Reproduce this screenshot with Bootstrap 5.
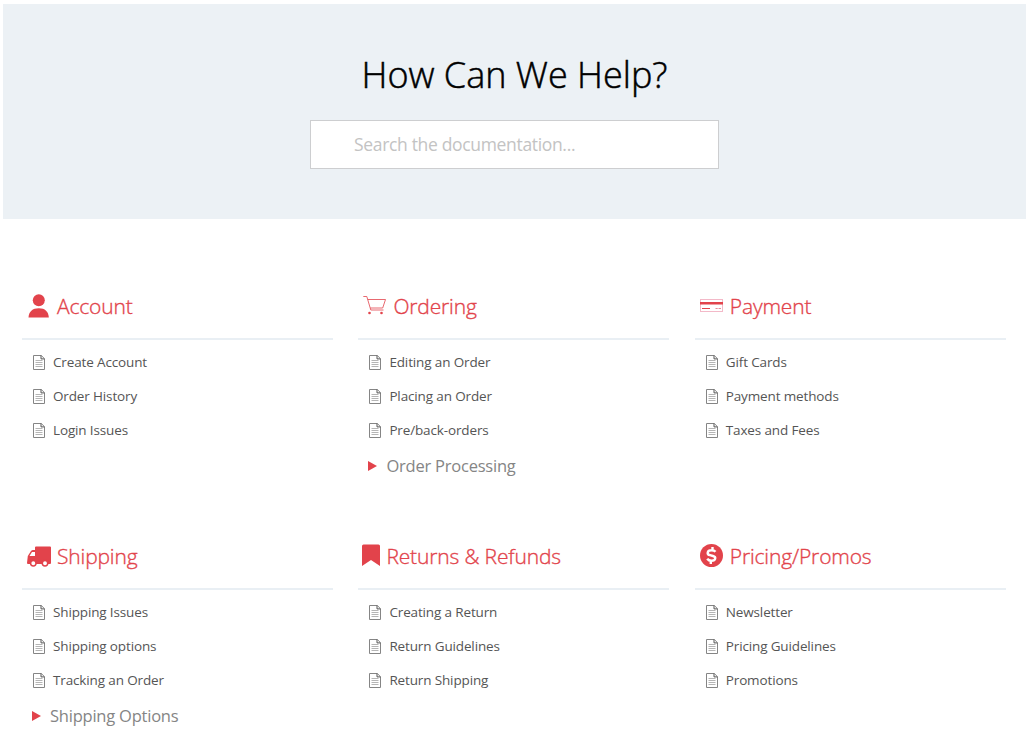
<!DOCTYPE html>
<html lang="en">
<head>
<meta charset="utf-8">
<meta name="viewport" content="width=device-width, initial-scale=1">
<title>Help Center</title>
<link rel="stylesheet" href="https://cdn.jsdelivr.net/npm/bootstrap@5.3.0/dist/css/bootstrap.min.css">
<style>
body{font-family:"Open Sans","Noto Sans",sans-serif;background:#fff}
.hero{margin:0 2px 0 3px;height:215px;background:#ecf1f5;padding-top:48px}
.page{padding-top:4px}
.hero h1{font-size:36px;line-height:46px;font-weight:300;color:#000;margin:0 0 22px;-webkit-text-stroke:.5px #000}
.search-box{width:409px;height:49px;border:1px solid #cdced0;padding:0 43px 2px;font-size:17.5px;color:#555;letter-spacing:-.33px}
.search-box::placeholder{color:#c3c3c3;opacity:1}
.topics{display:grid;grid-template-columns:311px 311px 311px;column-gap:25.4px;grid-template-rows:250px auto;margin:70px 0 0 22px}
.topic-title{height:51px;border-bottom:2px solid #e9eff4;color:#e2434b;padding:0 0 16px 5px;margin-bottom:5px}
.topic-title h2{font-size:21px;line-height:30px;font-weight:300;margin:0 0 0 6px;letter-spacing:-.15px;-webkit-text-stroke:.35px #e2434b}
.topic-title.narrow{padding-left:4px}
.docs li{height:34px;padding-left:11px;font-size:13.5px;color:#555;letter-spacing:-.14px}
.docs li.more{height:38px;padding-left:10px;font-size:16.5px;color:#858585;letter-spacing:-.22px}
.docs svg{margin-right:8px}
.docs li.more svg{margin-right:9px}
</style>
</head>
<body>
<svg class="d-none">
<symbol id="doc" viewBox="0 0 12 15"><path d="M.5.5h7.8l3.2 3.2v10.800H.5z" fill="#fff" stroke="#858585"/><path d="M8 .5v3.400h3.500" fill="none" stroke="#555"/><path d="M2.500 5.500h7M2.500 7.500h7M2.500 9.500h7M2.500 11.500h7" stroke="#b5b5b5"/></symbol>
<symbol id="tri" viewBox="0 0 9 10"><path d="M0 0l9 5-9 5z" fill="#e2434b"/></symbol>
</svg>
<div class="page">
<header class="hero d-flex flex-column align-items-center">
<h1><span>How Can We Help?</span></h1>
<input class="search-box rounded-0 bg-white" type="text" placeholder="Search the documentation..." aria-label="Search">
</header>
<main class="topics">
<section>
<div class="topic-title d-flex align-items-center"><svg width="24" height="26" viewBox="0 0 24 26" fill="currentColor"><circle cx="11.800" cy="7.200" r="6"/><path d="M1.500 24.500c.3-6 4-9.300 10.300-9.300s9.700 3.300 10 9.300z"/></svg><h2><span>Account</span></h2></div>
<ul class="docs list-unstyled m-0">
<li class="d-flex align-items-center"><svg width="12" height="15"><use href="#doc"/></svg><span>Create Account</span></li>
<li class="d-flex align-items-center"><svg width="12" height="15"><use href="#doc"/></svg><span>Order History</span></li>
<li class="d-flex align-items-center"><svg width="12" height="15"><use href="#doc"/></svg><span>Login Issues</span></li>
</ul>
</section>
<section>
<div class="topic-title d-flex align-items-center"><svg width="24" height="26" viewBox="0 0 24 26"><path d="M.3 3.500h3.500l4 13.500h12.700M4.800 6.500h17.700l-2.800 8.500H7.300" fill="none" stroke="currentColor" stroke-width=".8"/><circle cx="6.500" cy="20" r="1.300" fill="currentColor"/><circle cx="18.500" cy="20" r="1.300" fill="currentColor"/></svg><h2><span>Ordering</span></h2></div>
<ul class="docs list-unstyled m-0">
<li class="d-flex align-items-center"><svg width="12" height="15"><use href="#doc"/></svg><span>Editing an Order</span></li>
<li class="d-flex align-items-center"><svg width="12" height="15"><use href="#doc"/></svg><span>Placing an Order</span></li>
<li class="d-flex align-items-center"><svg width="12" height="15"><use href="#doc"/></svg><span>Pre/back-orders</span></li>
<li class="more d-flex align-items-center"><svg width="9" height="10"><use href="#tri"/></svg><span>Order Processing</span></li>
</ul>
</section>
<section>
<div class="topic-title d-flex align-items-center"><svg width="24" height="26" viewBox="0 0 24 26"><rect x=".5" y="6.500" width="22" height="12" fill="none" stroke="#f3b9c8"/><path d="M0 9h23v2.500H0z" fill="currentColor"/><path d="M2 15.500h8" stroke="currentColor"/><path d="M15.500 15.500h2.200M18.500 15.500h2.500" stroke="#e88a98"/></svg><h2><span>Payment</span></h2></div>
<ul class="docs list-unstyled m-0">
<li class="d-flex align-items-center"><svg width="12" height="15"><use href="#doc"/></svg><span>Gift Cards</span></li>
<li class="d-flex align-items-center"><svg width="12" height="15"><use href="#doc"/></svg><span>Payment methods</span></li>
<li class="d-flex align-items-center"><svg width="12" height="15"><use href="#doc"/></svg><span>Taxes and Fees</span></li>
</ul>
</section>
<section>
<div class="topic-title d-flex align-items-center"><svg width="24" height="26" viewBox="0 0 24 26"><path d="M9 3.500h14q1 0 1 1V20q0 1-1 1H1q-1 0-1-1l.8-7L4 8q.8-1 2-1h2V4.500q0-1 1-1z" fill="currentColor"/><path d="M2.500 13l2.500-4h3v4z" fill="#fff"/><g fill="#fff" stroke="currentColor" stroke-width="1.500"><circle cx="6.300" cy="20.300" r="2.700"/><circle cx="18" cy="20.300" r="2.700"/></g></svg><h2><span>Shipping</span></h2></div>
<ul class="docs list-unstyled m-0">
<li class="d-flex align-items-center"><svg width="12" height="15"><use href="#doc"/></svg><span>Shipping Issues</span></li>
<li class="d-flex align-items-center"><svg width="12" height="15"><use href="#doc"/></svg><span>Shipping options</span></li>
<li class="d-flex align-items-center"><svg width="12" height="15"><use href="#doc"/></svg><span>Tracking an Order</span></li>
<li class="more d-flex align-items-center"><svg width="9" height="10"><use href="#tri"/></svg><span>Shipping Options</span></li>
</ul>
</section>
<section>
<div class="topic-title narrow d-flex align-items-center"><svg width="18" height="26" viewBox="0 0 18 26" fill="currentColor"><path d="M1.500 1.500h15q1.500 0 1.500 1.500v20l-9-6-9 6V3q0-1.500 1.500-1.500z"/></svg><h2><span>Returns &amp; Refunds</span></h2></div>
<ul class="docs list-unstyled m-0">
<li class="d-flex align-items-center"><svg width="12" height="15"><use href="#doc"/></svg><span>Creating a Return</span></li>
<li class="d-flex align-items-center"><svg width="12" height="15"><use href="#doc"/></svg><span>Return Guidelines</span></li>
<li class="d-flex align-items-center"><svg width="12" height="15"><use href="#doc"/></svg><span>Return Shipping</span></li>
</ul>
</section>
<section>
<div class="topic-title d-flex align-items-center"><svg width="24" height="26" viewBox="0 0 24 26"><circle cx="11.500" cy="12.500" r="11.500" fill="currentColor"/><path d="M15.500 8.800c-1-1.300-2.300-1.600-4-1.600-4.500 0-5 4.200-1.500 5l3 .8c3.500 1 2.800 4.800-1.500 4.800-2 0-3.300-.6-4.300-2M12.500 4v3.500M10.800 17.500V21" fill="none" stroke="#fff" stroke-width="2.400"/></svg><h2><span>Pricing/Promos</span></h2></div>
<ul class="docs list-unstyled m-0">
<li class="d-flex align-items-center"><svg width="12" height="15"><use href="#doc"/></svg><span>Newsletter</span></li>
<li class="d-flex align-items-center"><svg width="12" height="15"><use href="#doc"/></svg><span>Pricing Guidelines</span></li>
<li class="d-flex align-items-center"><svg width="12" height="15"><use href="#doc"/></svg><span>Promotions</span></li>
</ul>
</section>
</main>
</div>
<script src="https://cdn.jsdelivr.net/npm/bootstrap@5.3.0/dist/js/bootstrap.bundle.min.js"></script>
</body>
</html>
